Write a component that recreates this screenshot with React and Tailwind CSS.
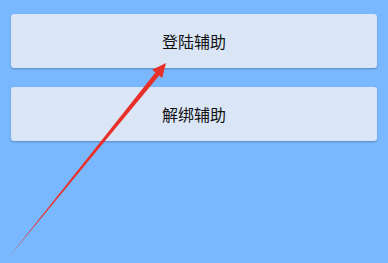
export default function App() {
  const items = ["登陆辅助", "解绑辅助"];

  return (
    <div className="relative h-[263px] w-[388px] overflow-hidden bg-[#79b8ff] px-[11px] pt-[14px] font-['Noto_Sans_CJK_SC',sans-serif]">
      <div className="flex flex-col gap-[19px]">
        {items.map((label) => (
          <button
            key={label}
            className="flex h-[54px] w-full items-center justify-center rounded-[3px] bg-[#dae6f6] text-[16px] text-[#111111] shadow-[0_1px_2px_rgba(0,0,0,0.25)]"
          >
            {label}
          </button>
        ))}
      </div>

      {/* annotation arrow */}
      <svg className="pointer-events-none absolute left-0 top-0" width="388" height="263" viewBox="0 0 388 263">
        <polygon
          points="9,257 159.2,75.6 162.2,78 166,63 152.2,69.8 155.4,72.4"
          fill="#e8302a"
        />
      </svg>
    </div>
  );
}
